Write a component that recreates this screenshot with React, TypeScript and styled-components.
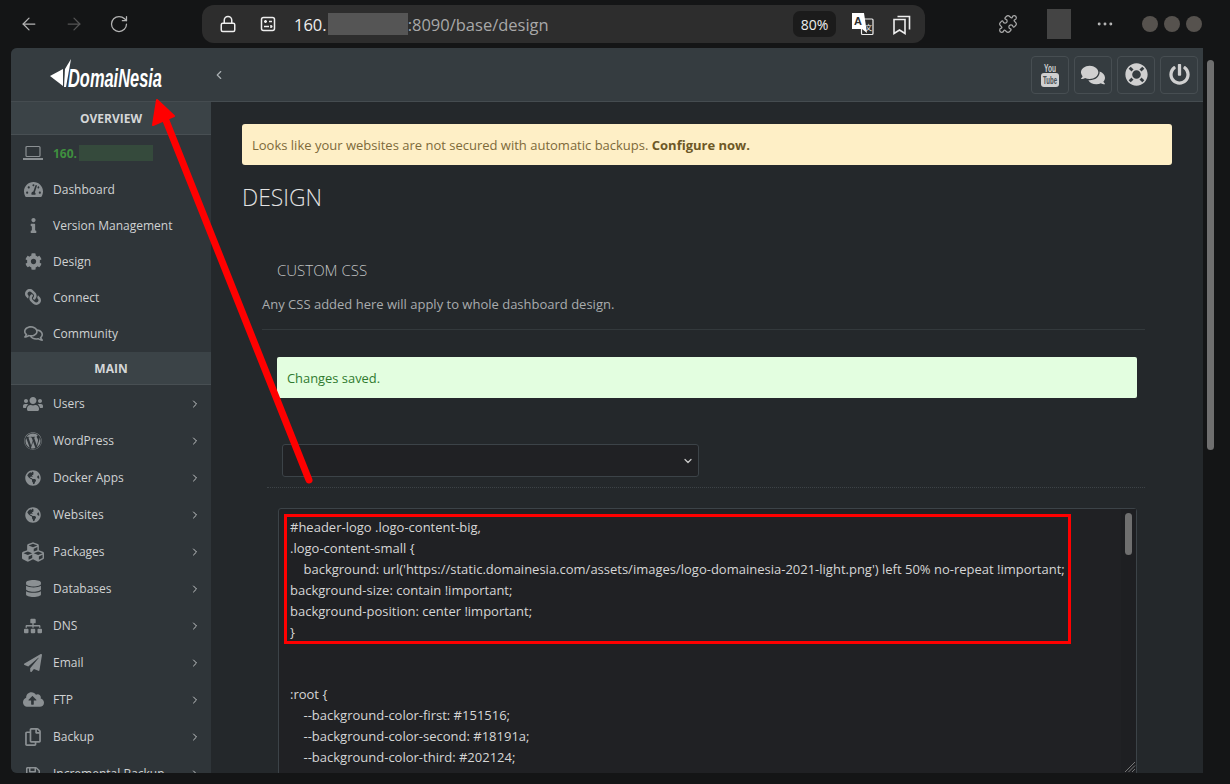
import React from "react";
import styled, { createGlobalStyle } from "styled-components";
import { ArrowLeft, ArrowRight, RotateCw, Lock, Puzzle, MoreHorizontal, ChevronRight, ChevronLeft, ChevronDown } from "lucide-react";
import {
  FaTachometerAlt, FaInfo, FaCog, FaLink, FaRegComments, FaUsers, FaWordpress, FaGlobeAmericas,
  FaCubes, FaDatabase, FaSitemap, FaPaperPlane, FaCloudUploadAlt, FaRegCopy, FaRegSave, FaComments,
  FaLifeRing, FaPowerOff,
} from "react-icons/fa";

const Global = createGlobalStyle`
  html, body { margin: 0; padding: 0; height: 784px; overflow: hidden; background: #141516; }
  * { box-sizing: border-box; }
  body { font-family: "Open Sans", "Liberation Sans", sans-serif; font-size: 13px; }
`;

const Screen = styled.div`
  position: relative; width: 1230px; height: 784px; overflow: hidden; background: #141516;
  display: flex; flex-direction: column;
`;
const Chrome = styled.header`height: 48px; display: flex; align-items: flex-start; flex: none;`;
const NavGroup = styled.div`
  width: 202px; height: 48px; display: flex; align-items: center; gap: 25px; padding-left: 19px; color: #b4b4b4;
`;
const NavButton = styled.span<{ $off?: boolean }>`display: flex; margin-top: -1px; color: ${p => (p.$off ? "#555" : "#b4b4b4")};`;
const AddressBar = styled.div`
  margin-top: 5px; width: 723px; height: 38px; border-radius: 12px; background: #2d2d2d;
  display: flex; align-items: center; padding-left: 17px; color: #eee;
`;
const SiteIcons = styled.span`display: flex; align-items: center; gap: 23px; width: 75px; color: #eee;`;
const Url = styled.span`font-size: 16.5px; color: #eee; flex: 1; display: flex; align-items: center; white-space: pre;`;
const UrlMuted = styled.span`color: #a8a8a8;`;
const UrlMask = styled.span`width: 80px; height: 22px; margin-left: 1px; background: #555;`;
const ZoomPill = styled.span`
  width: 43px; height: 26px; border-radius: 7px; background: #1b1b1b; color: #eee; font-size: 14px;
  display: flex; align-items: center; justify-content: center; margin-right: 16px;
`;
const AddressActions = styled.span`display: flex; align-items: center; gap: 19px; width: 73px; color: #eee;`;
const ChromeRight = styled.div`flex: 1; height: 48px; display: flex; align-items: center; color: #aaa;`;
const PuzzleSlot = styled.span`display: flex; margin-left: 73px;`;
const ProfileMask = styled.span`width: 24px; height: 30px; background: #444; margin-left: 29px;`;
const MoreSlot = styled.span`display: flex; margin-left: 24px; color: #bbb;`;
const Dots = styled.span`display: flex; gap: 6px; margin-left: 27px;`;
const Dot = styled.span`width: 16px; height: 16px; border-radius: 50%; background: #56524e;`;

const Stage = styled.div`flex: none; height: 725px; display: flex; padding-left: 11px;`;
const Window = styled.div`
  width: 1192px; height: 725px; overflow: hidden; display: flex; flex-direction: column;
  border-radius: 6px 0 0 6px; background: #24282b;
`;
const PageScroll = styled.div`width: 14px; padding: 12px 3px 0 4px;`;
const PageThumb = styled.div`width: 7px; height: 390px; border-radius: 4px; background: #6f6f6f;`;
const TopBar = styled.div`
  height: 54px; flex: none; background: #353c40; border-bottom: 1px solid #454c50;
  display: flex; align-items: center;
`;
const LogoCell = styled.div`width: 200px; height: 53px; display: flex; align-items: center; padding-left: 39px; flex: none;`;
const Collapse = styled.span`display: flex; color: #aab0b3; margin-left: 1px;`;
const TopActions = styled.div`margin-left: auto; display: flex; gap: 5px; padding-right: 5px;`;
const TopButton = styled.span`
  width: 38px; height: 38px; border: 1px solid #474e52; border-radius: 4px;
  display: flex; align-items: center; justify-content: center; color: #d0d0d0;
`;
const Body = styled.div`flex: 1; min-height: 0; display: flex;`;
const Sidebar = styled.nav`width: 200px; flex: none; background: #2f3539; overflow: hidden;`;
const SideGroup = styled.div`padding-bottom: 1px;`;
const SideHead = styled.div`
  height: 33px; padding-top: 1px; background: #3b4347; border-bottom: 1px solid #484f53; color: #d4d6d7;
  font-size: 12px; font-weight: 700; display: flex; align-items: center; justify-content: center;
`;
const SideRow = styled.a<{ $tall?: boolean }>`
  height: ${p => (p.$tall ? 37 : 36)}px; display: flex; align-items: center; padding-left: 11px;
  color: #cfd2d3; font-size: 12px;
`;
const SideIcon = styled.span<{ $flip?: boolean }>`
  width: 22px; display: flex; justify-content: center; color: #8b9093; margin-right: 9px; flex: none;
  transform: ${p => (p.$flip ? "scaleX(-1)" : "none")};
`;
const SideLabel = styled.span`flex: 1;`;
const SideArrow = styled.span`display: flex; color: #c4c7c8; margin-right: 10px;`;
const ServerName = styled.span`color: #3f8f3f; font-weight: 700; display: flex; align-items: center;`;
const ServerMask = styled.span`width: 74px; height: 16px; background: #354a3c; margin-left: 2px;`;

const Main = styled.main`flex: 1; min-width: 0; padding: 22px 31px 0; overflow: hidden;`;
const Warning = styled.div`
  height: 41px; background: #feefc6; border-radius: 3px; padding: 0 10px; display: flex; align-items: center;
  color: #7d6a3a; font-size: 13px; white-space: pre;
`;
const WarningLink = styled.b`color: #6d5826; font-weight: 700;`;
const PageTitle = styled.h1`
  margin: 17px 0 0; font-size: 22.9px; line-height: 32px; font-weight: 300; color: #e2e2e2;
`;
const Panel = styled.section`margin: 46px 27px 0 20px;`;
const PanelTitle = styled.h2`
  margin: 0 0 0 15px; font-size: 15px; line-height: 20px; font-weight: 300; color: #c2c4c5;
`;
const PanelText = styled.p`
  margin: 14px 0 0; font-size: 13px; line-height: 20px; color: #a9acae; padding-bottom: 15px;
  border-bottom: 1px solid #33393c;
`;
const Success = styled.div`
  margin: 27px 8px 0 15px; height: 41px; background: #e3fee0; border-radius: 2px; padding: 0 10px;
  display: flex; align-items: center; color: #2f7a2f; font-size: 12.9px;
`;
const SelectBox = styled.div`
  margin: 46px 0 0 20px; width: 417px; height: 33px; background: #202124; border: 1px solid #3c4348;
  border-radius: 3px; display: flex; align-items: center; justify-content: flex-end; padding-right: 4px; color: #c8c8c8;
`;
const DottedRule = styled.div`margin: 10px 0 0 5px; border-top: 1px dotted #3d4347;`;
const Editor = styled.div`
  position: relative; margin: 20px 8px 0 16px; height: 300px; background: #202124; border: 1px solid #3c4348;
  border-radius: 3px; padding: 8px 11px; color: #d6d6d6; font-size: 13px; line-height: 20.9px; white-space: pre;
`;
const EditorTrack = styled.div`position: absolute; top: 0; right: 0; bottom: 0; width: 15px; background: #1e1f22;`;
const EditorThumb = styled.div`
  position: absolute; top: 4px; right: 4px; width: 7px; height: 42px; border-radius: 4px; background: #6f6f6f;
`;
const Grip = styled.svg`position: absolute; right: 0; top: 252px;`;

const Overlay = styled.svg`position: absolute; left: 0; top: 0; pointer-events: none;`;

const Logo = () => (
  <svg width="116" height="38" viewBox="0 0 116 38" aria-label="DomaiNesia">
    <path d="M0 20 L13 13 L13 30 Z" fill="#fff" />
    <path d="M15 13 L21 3 L18 20 L16 31 L14 31 Z" fill="#fff" />
    <text x="18" y="31" fontFamily="Liberation Sans" fontStyle="italic" fontWeight="700" fontSize="26" fill="#fff" textLength="94" lengthAdjust="spacingAndGlyphs">DomaiNesia</text>
  </svg>
);

const TubeIcon = () => (
  <svg width="22" height="30" viewBox="0 0 22 30" aria-label="YouTube">
    <text x="11" y="12" textAnchor="middle" fontFamily="Liberation Sans" fontWeight="700" fontSize="10" fill="#d0d0d0" textLength="12" lengthAdjust="spacingAndGlyphs">You</text>
    <rect x="2" y="13" width="18" height="14" rx="3" fill="#d0d0d0" />
    <text x="11" y="24" textAnchor="middle" fontFamily="Liberation Sans" fontWeight="700" fontSize="10" fill="#4a5155" textLength="14" lengthAdjust="spacingAndGlyphs">Tube</text>
  </svg>
);

const SiteInfo = () => (
  <svg width="16" height="16" viewBox="0 0 16 16" fill="none" stroke="currentColor" strokeWidth="1.5">
    <rect x="1.5" y="1.5" width="13" height="13" rx="2" />
    <path d="M4 5.5h3M5.5 4v3M9 5.5h3M4 10.5h5M11 9v3M11 10.5h1.5" />
  </svg>
);

const Favs = () => (
  <svg width="18" height="22" viewBox="0 0 18 22" fill="none" stroke="currentColor" strokeWidth="1.6">
    <path d="M1 6.5h11v14l-5.5-3.5L1 20.5z" />
    <path d="M4.5 3.5h12v13" />
  </svg>
);

const Translate = () => (
  <svg width="22" height="24" viewBox="0 0 22 24" aria-label="Translate">
    <rect x="9.5" y="7" width="11.5" height="15.5" rx="1" fill="none" stroke="#eee" strokeWidth="1.2" />
    <path d="M0 1h12l3 20-5-4H0z" fill="#fff" />
    <text x="6" y="13" textAnchor="middle" fontFamily="Liberation Sans" fontWeight="700" fontSize="11" fill="#2d2d2d">A</text>
    <text x="16.5" y="18" textAnchor="middle" fontFamily="Noto Sans CJK SC" fontSize="7" fill="#eee">文</text>
  </svg>
);

const Laptop = () => (
  <svg width="20" height="16" viewBox="0 0 20 16" fill="none" stroke="currentColor">
    <rect x="3" y="1.5" width="14" height="10" rx="1" strokeWidth="1.2" />
    <path d="M0 14h20" strokeWidth="2" />
  </svg>
);

const overview = [
  { icon: <FaTachometerAlt size={19} />, label: "Dashboard" },
  { icon: <FaInfo size={15} />, label: "Version Management" },
  { icon: <FaCog size={17} />, label: "Design" },
  { icon: <FaLink size={16} />, label: "Connect", flip: true },
  { icon: <FaRegComments size={19} />, label: "Community" },
];
const main = [
  { icon: <FaUsers size={20} />, label: "Users" },
  { icon: <FaWordpress size={18} />, label: "WordPress" },
  { icon: <FaGlobeAmericas size={16} />, label: "Docker Apps" },
  { icon: <FaGlobeAmericas size={16} />, label: "Websites" },
  { icon: <FaCubes size={22} />, label: "Packages" },
  { icon: <FaDatabase size={17} />, label: "Databases" },
  { icon: <FaSitemap size={18} />, label: "DNS" },
  { icon: <FaPaperPlane size={18} />, label: "Email" },
  { icon: <FaCloudUploadAlt size={21} />, label: "FTP" },
  { icon: <FaRegCopy size={18} />, label: "Backup" },
  { icon: <FaRegSave size={16} />, label: "Incremental Backup" },
];

const css = `#header-logo .logo-content-big,
.logo-content-small {
    background: url('https://static.domainesia.com/assets/images/logo-domainesia-2021-light.png') left 50% no-repeat !important;
background-size: contain !important;
background-position: center !important;
}


:root {
    --background-color-first: #151516;
    --background-color-second: #18191a;
    --background-color-third: #202124;
    --background-color-fourth: #26282b;`;

export default function App() {
  return (
    <Screen>
      <Global />
      <Chrome>
        <NavGroup>
          <NavButton><ArrowLeft size={20} strokeWidth={1.5} /></NavButton>
          <NavButton $off><ArrowRight size={20} strokeWidth={1.5} /></NavButton>
          <NavButton><RotateCw size={20} strokeWidth={1.5} /></NavButton>
        </NavGroup>
        <AddressBar>
          <SiteIcons><Lock size={18} strokeWidth={2} /><SiteInfo /></SiteIcons>
          <Url>160.<UrlMask /><UrlMuted>:8090/base/design</UrlMuted></Url>
          <ZoomPill>80%</ZoomPill>
          <AddressActions><Translate /><Favs /></AddressActions>
        </AddressBar>
        <ChromeRight>
          <PuzzleSlot><Puzzle size={20} strokeWidth={1.5} /></PuzzleSlot>
          <ProfileMask />
          <MoreSlot><MoreHorizontal size={20} strokeWidth={1.5} /></MoreSlot>
          <Dots><Dot /><Dot /><Dot /></Dots>
        </ChromeRight>
      </Chrome>
      <Stage>
        <Window>
          <TopBar>
            <LogoCell><Logo /></LogoCell>
            <Collapse><ChevronLeft size={14} strokeWidth={2} /></Collapse>
            <TopActions>
              <TopButton><TubeIcon /></TopButton>
              <TopButton><FaComments size={24} /></TopButton>
              <TopButton><FaLifeRing size={23} /></TopButton>
              <TopButton><FaPowerOff size={21} /></TopButton>
            </TopActions>
          </TopBar>
          <Body>
            <Sidebar>
              <SideGroup>
                <SideHead>OVERVIEW</SideHead>
                <SideRow>
                  <SideIcon><Laptop /></SideIcon>
                  <ServerName>160.<ServerMask /></ServerName>
                </SideRow>
                {overview.map(r => (
                  <SideRow key={r.label}>
                    <SideIcon $flip={r.flip}>{r.icon}</SideIcon>
                    <SideLabel>{r.label}</SideLabel>
                  </SideRow>
                ))}
              </SideGroup>
              <SideGroup>
                <SideHead>MAIN</SideHead>
                {main.map(r => (
                  <SideRow $tall key={r.label}>
                    <SideIcon>{r.icon}</SideIcon>
                    <SideLabel>{r.label}</SideLabel>
                    <SideArrow><ChevronRight size={12} strokeWidth={2} /></SideArrow>
                  </SideRow>
                ))}
              </SideGroup>
            </Sidebar>
            <Main>
              <Warning>Looks like your websites are not secured with automatic backups. <WarningLink>Configure now.</WarningLink></Warning>
              <PageTitle>DESIGN</PageTitle>
              <Panel>
                <PanelTitle>CUSTOM CSS</PanelTitle>
                <PanelText>Any CSS added here will apply to whole dashboard design.</PanelText>
                <Success>Changes saved.</Success>
                <SelectBox><ChevronDown size={12} strokeWidth={2.5} /></SelectBox>
                <DottedRule />
                <Editor>
                  <EditorTrack />
                  {css}
                  <EditorThumb />
                  <Grip width="12" height="12" viewBox="0 0 12 12" stroke="#777" strokeWidth="1">
                    <path d="M11 1L1 11M11 4.5L4.5 11M11 8L8 11" />
                  </Grip>
                </Editor>
              </Panel>
            </Main>
          </Body>
        </Window>
        <PageScroll><PageThumb /></PageScroll>
      </Stage>
      <Overlay width="1230" height="784" viewBox="0 0 1230 784">
        <rect x="285.5" y="515.5" width="784" height="127" fill="none" stroke="#f00" strokeWidth="3" />
        <path d="M309 480L165 118" stroke="#f00" strokeWidth="7" strokeLinecap="round" fill="none" />
        <path d="M157 100L174 116L153 125Z" fill="#f00" stroke="#f00" strokeWidth="2" strokeLinejoin="round" />
      </Overlay>
    </Screen>
  );
}
